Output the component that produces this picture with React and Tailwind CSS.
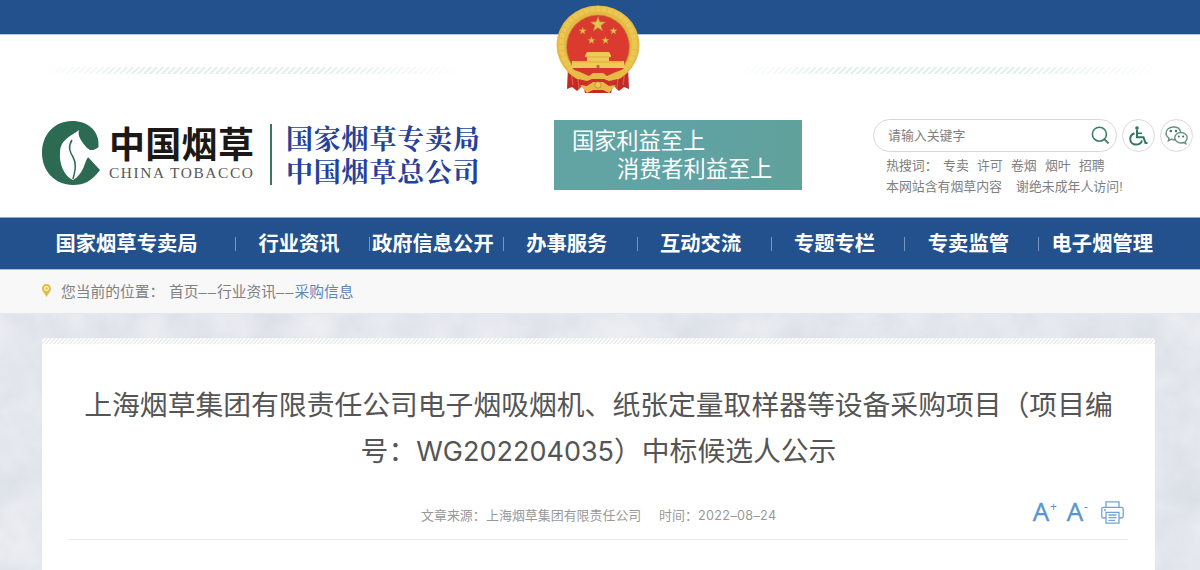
const NAV_ITEMS = [
  '行业资讯',
  '政府信息公开',
  '办事服务',
  '互动交流',
  '专题专栏',
  '专卖监管',
  '电子烟管理',
];

const HOT_WORDS = ['专卖', '许可', '卷烟', '烟叶', '招聘'];

export default function App() {
  return (
    <div className="w-[1200px] h-[570px] overflow-hidden flex flex-col bg-white font-['Liberation_Sans','Noto_Sans_CJK_SC',sans-serif]">
      <Header />
      <NavBar />
      <Breadcrumb />
      <Article />
    </div>
  );
}

function Header() {
  return (
    <header className="relative h-[217px] shrink-0">
      <div className="h-[35px] bg-[#22518e] border-b border-[#b4c8e0]" />
      <Emblem />

      {/* Decorative stripes */}
      <div className="flex justify-between pt-[32px] pl-[42px] pr-[38px]">
        <Stripes />
        <Stripes />
      </div>

      <div className="flex items-start pt-[46px] pl-[42px]">
        <Logo />
        <div className="ml-[73px] w-[248px] h-[70px] pl-[18px] pt-[8px] text-white text-[22.2px] leading-[28px] whitespace-nowrap bg-linear-to-r from-[#62a4a2] via-[#60a3a5] to-[#61a19b]">
          <p>国家利益至上</p>
          <p className="pl-[45px]">消费者利益至上</p>
        </div>
        <SearchArea />
      </div>
    </header>
  );
}

function Stripes() {
  return (
    <div className="w-[425px] h-[7px] bg-[linear-gradient(135deg,#e4f0ed_25%,#ffffff_25%,#ffffff_50%,#e4f0ed_50%,#e4f0ed_75%,#ffffff_75%)] bg-size-[6px_6px] mask-[linear-gradient(to_right,transparent,black_25%,black_65%,transparent)]" />
  );
}

function Logo() {
  return (
    <div className="flex w-[439px] h-[70px]">
      <svg width="60" height="66" viewBox="0 0 60 66" className="mt-px shrink-0">
        <path
          d="M56.5 26C58 10 46 0 30 0C12 0 0 14 0 32C0 50 13 64 31 64C42 64 50 60 58 49L45 35L37 40L28 30L38 20C42 29 50 32 56.5 26Z"
          fill="#2c6a52"
        />
        <path
          d="M37 9C35 15 40 21 45 27L47.5 28.5C45 31 46 34 46.5 36C42 40 43 52 31 59C22 55 17 43 18 31C19 18 28 16 37 9Z"
          fill="#fff"
        />
        <path d="M30 19C25.5 26 28 31 31 36C35 43 33 50 31 58" fill="none" stroke="#2c6a52" strokeWidth="1.5" />
      </svg>
      <div className="ml-[7px] w-[148px] shrink-0 whitespace-nowrap">
        <p className="mt-[6px] h-[40px] text-[36px] leading-[40px] font-bold tracking-[0.3px] text-[#1c1815]">中国烟草</p>
        <p className="mt-[-2px] text-[15.4px] leading-[18px] tracking-[1.6px] text-[#5a5755] font-['Liberation_Serif',serif]">
          CHINA TOBACCO
        </p>
      </div>
      <div className="ml-[13px] mt-[4px] w-[2px] h-[61px] shrink-0 bg-[#3b7564]" />
      <div className="ml-[14px] mt-[4px] text-[27px] leading-[33px] font-bold tracking-[0.8px] text-[#25429a] whitespace-nowrap font-['Liberation_Serif','Noto_Serif_CJK_SC','Noto_Sans_CJK_SC',serif]">
        <p>国家烟草专卖局</p>
        <p>中国烟草总公司</p>
      </div>
    </div>
  );
}

function SearchArea() {
  return (
    <div className="ml-[71px] whitespace-nowrap text-[#808080] text-[12.9px]">
      <div className="flex items-center -mt-px">
        <div className="flex items-center justify-between w-[244px] h-[33px] rounded-full border border-[#d8d8d8] pl-[14px] pr-[6px]">
          <span>请输入关键字</span>
          <svg width="19" height="19" viewBox="0 0 19 19" fill="none" stroke="#3b7d69">
            <circle cx="8.4" cy="8.2" r="7" strokeWidth="1.6" />
            <path d="M13.5 13.4L17.6 17.4" strokeWidth="2" />
          </svg>
        </div>
        <div className="ml-[5px] size-[33px] rounded-full border border-[#d9d9d9] flex items-center justify-center">
          <svg width="19" height="20" viewBox="0 0 19 20" fill="none" stroke="#32765f" strokeWidth="2">
            <circle cx="8" cy="2.1" r="1.8" fill="#32765f" stroke="none" />
            <path d="M8 4V11.3H14.5L16.5 17H18.5" />
            <path d="M8 7.3H13" strokeWidth="1.6" />
            <path d="M5.5 7.3C2.8 8.3 1.2 10.5 1.2 13C1.2 16.2 3.8 18.6 7.1 18.6C10 18.6 12.3 17 13 14.5" />
          </svg>
        </div>
        <div className="ml-[5px] size-[33px] rounded-full border border-[#d9d9d9] flex items-center justify-center">
          <svg width="23" height="19" viewBox="0 0 23 19" fill="none" stroke="#65917f" strokeWidth="1.4">
            <path d="M10.6 13.5C9.2 13.8 7.6 13.7 6.2 13.2L3.4 14.8L4 12.1C2 10.8 1 9.2 1 7.2C1 3.7 4.3 1 8.4 1C12 1 15 3 15.6 5.9" />
            <path d="M15.8 6.5C12.3 6.5 9.8 8.9 9.8 11.7C9.8 14.6 12.5 17 15.9 17C16.8 17 17.7 16.8 18.5 16.5L20.8 17.7L20.3 15.5C21.5 14.5 22.2 13.2 22.2 11.7C22.2 8.8 19.3 6.5 15.8 6.5Z" />
            <g fill="#32765f" stroke="none">
              <circle cx="5.8" cy="5" r="1.2" />
              <circle cx="11" cy="5" r="1.2" />
              <circle cx="13.8" cy="10.4" r="1" />
              <circle cx="18.1" cy="10.4" r="1" />
            </g>
          </svg>
        </div>
      </div>
      <div className="flex pl-[13px] mt-[4px] h-[21px] leading-[20px] text-[12.9px]">
        <span className="w-[57px]">热搜词：</span>
        <div className="flex gap-[8.2px]">
          {HOT_WORDS.map((word) => (
            <a key={word}>{word}</a>
          ))}
        </div>
      </div>
      <p className="flex gap-[14px] pl-[13px] leading-[20px]">
        <span>本网站含有烟草内容</span>
        <span>谢绝未成年人访问!</span>
      </p>
    </div>
  );
}

function NavBar() {
  return (
    <nav className="flex items-center h-[53px] shrink-0 bg-[#22518e] border-t border-t-[#91a7c2] border-b border-b-[#a9c0dc] text-white text-[20.3px] font-bold whitespace-nowrap">
      <a className="w-[235px] pt-[2px] pl-[18px] text-center">国家烟草专卖局</a>
      {NAV_ITEMS.map((item) => (
        <div key={item} className="flex items-center">
          <span className="w-px h-[14px] bg-[#7895bb]" />
          <a className="w-[132.9px] pt-[2px] pr-[7px] text-center">{item}</a>
        </div>
      ))}
    </nav>
  );
}

function Breadcrumb() {
  return (
    <div className="flex items-center h-[44px] shrink-0 pt-px pl-[42px] bg-[#f8f8f8] border-b border-[#e6e7e9] text-[14.75px] text-[#808080] whitespace-nowrap">
      <svg width="9" height="13" viewBox="0 0 9 13" className="mr-[10px] mb-[4px]">
        <path d="M4.5 0C2 0 0 2 0 4.5C0 7.5 3 10 4.5 13C6 10 9 7.5 9 4.5C9 2 7 0 4.5 0Z" fill="#e0bd46" />
        <circle cx="4.5" cy="4.5" r="1.9" fill="none" stroke="#fff5c8" strokeWidth="1.2" />
      </svg>
      <span className="w-[108px]">您当前的位置：</span>
      <span>首页</span>
      <Dashes />
      <span>行业资讯</span>
      <Dashes />
      <span className="text-[#6086b4]">采购信息</span>
    </div>
  );
}

function Dashes() {
  return <span className="w-[18.5px] text-center font-['Liberation_Sans'] tracking-[1px]">––</span>;
}

function Article() {
  return (
    <section className="relative flex-1 pt-[24px] pl-[42px] pr-[45px] bg-[#e3e6ed]">
      {/* Marble texture */}
      <svg className="absolute inset-0" width="1200" height="256">
        <filter id="marble" x="0" y="0" width="100%" height="100%" colorInterpolationFilters="sRGB">
          <feTurbulence type="fractalNoise" baseFrequency="0.02" numOctaves="6" seed="21" />
          <feColorMatrix values="0.1 0 0 0 0.842  0.085 0 0 0 0.862  0.07 0 0 0 0.893  0 0 0 0 1" />
        </filter>
        <rect width="1200" height="256" filter="url(#marble)" />
      </svg>

      <div className="relative h-full bg-white px-[27px] flex flex-col">
        <div className="-mx-[27px] h-[6px] shrink-0 bg-[linear-gradient(135deg,#ececec_25%,#ffffff_25%,#ffffff_50%,#ececec_50%,#ececec_75%,#ffffff_75%)] bg-size-[4px_4px]" />
        <h1 className="mt-[39px] text-center text-[27.8px] leading-[46px] text-[#555555] whitespace-nowrap">
          上海烟草集团有限责任公司电子烟吸烟机、纸张定量取样器等设备采购项目（项目编
          <br />
          号：<span className="font-['Inter'] text-[27px]">WG202204035</span>）中标候选人公示
        </h1>

        <div className="mt-[21px] h-[44px] flex border-b border-[#e8e8e8] text-[12.95px] text-[#999999] whitespace-nowrap">
          <div className="ml-[352px] pt-[10px] leading-[20px] flex w-[612px]">
            <span className="w-[65px]">文章来源：</span>
            <span className="w-[173px]">上海烟草集团有限责任公司</span>
            <span className="w-[39px]">时间：</span>
            <span className="font-['Inter'] text-[12.6px] tracking-[0.35px]">2022–08–24</span>
          </div>
          <div className="flex pt-[5px] text-[#5695cd]">
            <FontSizeButton sign="+" />
            <FontSizeButton sign="-" />
            <PrinterIcon />
          </div>
        </div>
      </div>
    </section>
  );
}

function FontSizeButton({ sign }) {
  return (
    <button className="flex w-[34px] h-[22px] -ml-px mr-px items-start font-['Open_Sans'] font-medium">
      <span className="w-[18px] text-[26px] leading-[21px] [-webkit-text-stroke:0.4px]">A</span>
      <span className="text-[12px] leading-[11px]">{sign}</span>
    </button>
  );
}

function PrinterIcon() {
  return (
    <svg width="23" height="23" viewBox="0 0 23 23" fill="none" stroke="#72a5d5" strokeWidth="1.3">
      <path d="M5 6V0.8H18V6" />
      <path d="M5 17H2.5Q0.8 17 0.8 15.3V8Q0.8 6.3 2.5 6.3H20.5Q22.2 6.3 22.2 8V15.3Q22.2 17 20.5 17H18" />
      <path d="M5 11.3H18V22.2H5Z" />
      <path d="M7.5 14H15.5M7.5 16.7H15.5M7.5 19.4H14M3 9H5" />
    </svg>
  );
}

function Star({ x, y, r }) {
  return (
    <path
      transform={`translate(${x} ${y}) scale(${r})`}
      d="M0 -1L.24 -.33L.95 -.31L.38 .13L.59 .81L0 .4L-.59 .81L-.38 .13L-.95 -.31L-.24 -.33Z"
      fill="#e7c253"
      stroke="#b87c2a"
      strokeWidth="0.08"
    />
  );
}

function Emblem() {
  return (
    <svg className="absolute left-[556px] top-[5px]" width="84" height="90" viewBox="0 0 84 90">
      {/* Ribbons */}
      <path d="M12 62L11 84L16 82L21 86L27 80L29 88L55 88L57 80L63 86L68 82L73 84L72 62Z" fill="#c32a26" />
      <path d="M15 66L17 80M22 72L23 84M62 72L61 84M69 66L67 80" stroke="#e15543" strokeWidth="1.4" />
      {/* Wreath */}
      <ellipse cx="42" cy="40" rx="41.5" ry="39.5" fill="#e5ba42" />
      <ellipse cx="42" cy="39.5" rx="36.8" ry="35.5" fill="none" stroke="#ecc755" strokeWidth="5" strokeDasharray="5 1" />
      <ellipse cx="42" cy="42" rx="31.5" ry="32" fill="#db3a2e" stroke="#c48f2e" strokeWidth="0.8" />
      <Star x={42} y={19.5} r={8} />
      <Star x={26.7} y={26} r={4} />
      <Star x={57.5} y={26} r={4} />
      <Star x={35.5} y={35.5} r={4} />
      <Star x={49.5} y={35.5} r={4} />
      {/* Gate */}
      <path d="M31 47H53L55 50.5V52H53V56H68V63H16V56H31V52H29V50.5Z" fill="#f0ca57" />
      <path d="M30 52H54M17 57H67" stroke="#d2a03a" strokeWidth="0.7" />
      <path d="M40.5 63V60.5Q42 59 43.5 60.5V63Z" fill="#a9772e" />
      {/* Cog and knot */}
      <path d="M16 63H68L60 70L50 74H34L24 70Z" fill="#d5352b" />
      <path d="M13 63L24 67L33 71L37 68H47L51 71L60 67L71 63L62 74L53 76L48 74H36L31 76L22 74Z" fill="#e5bd46" />
      <path d="M22 74L31 76L36 74H48L53 76L62 74L57 82H27Z" fill="#cc2f28" />
      <path d="M31 81L37 77H47L53 81L60 80L53 88L47 85H37L31 88L24 80Z" fill="#e6bb45" />
      <circle cx="42" cy="80" r="3.2" fill="#efca58" stroke="#b97829" strokeWidth="0.7" />
    </svg>
  );
}
